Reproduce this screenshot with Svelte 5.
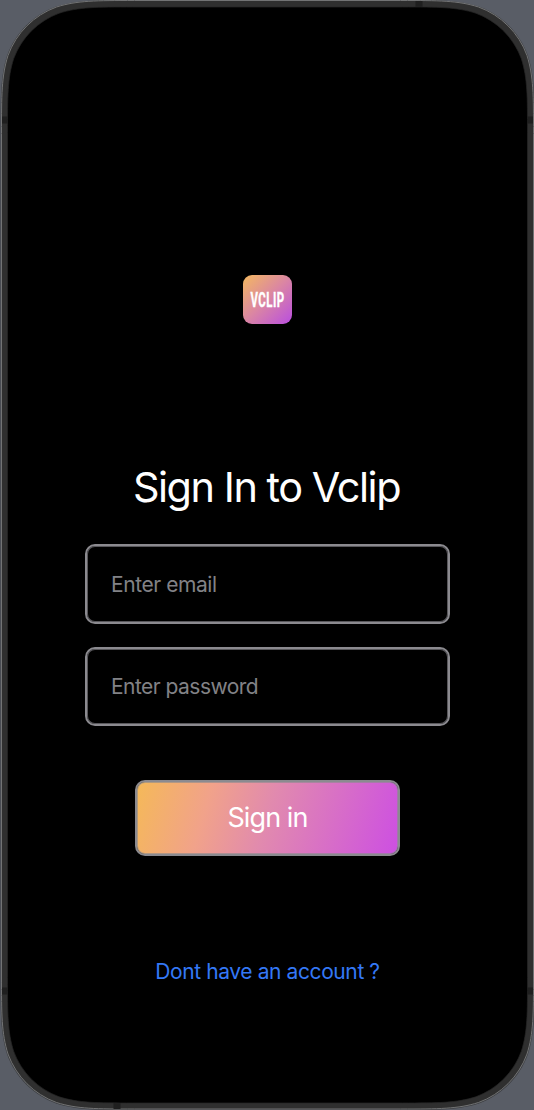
<script>
  let email = $state('');
  let password = $state('');

  // Continuous-curvature rounded rectangle, as used for device outlines.
  function outline(x0, y0, x1, y1, r) {
    const a = 1.5287 * r, b = 1.0885 * r, c = 0.8684 * r, d = 0.0749 * r;
    const e = 0.6315 * r, f = 0.3728 * r, g = 0.1691 * r;
    return [
      `M${x0 + a} ${y0}H${x1 - a}`,
      `C${x1 - b} ${y0} ${x1 - c} ${y0} ${x1 - e} ${y0 + d}`,
      `C${x1 - f} ${y0 + g} ${x1 - g} ${y0 + f} ${x1 - d} ${y0 + e}`,
      `C${x1} ${y0 + c} ${x1} ${y0 + b} ${x1} ${y0 + a}V${y1 - a}`,
      `C${x1} ${y1 - b} ${x1} ${y1 - c} ${x1 - d} ${y1 - e}`,
      `C${x1 - g} ${y1 - f} ${x1 - f} ${y1 - g} ${x1 - e} ${y1 - d}`,
      `C${x1 - c} ${y1} ${x1 - b} ${y1} ${x1 - a} ${y1}H${x0 + a}`,
      `C${x0 + b} ${y1} ${x0 + c} ${y1} ${x0 + e} ${y1 - d}`,
      `C${x0 + f} ${y1 - g} ${x0 + g} ${y1 - f} ${x0 + d} ${y1 - e}`,
      `C${x0} ${y1 - c} ${x0} ${y1 - b} ${x0} ${y1 - a}V${y0 + a}`,
      `C${x0} ${y0 + b} ${x0} ${y0 + c} ${x0 + d} ${y0 + e}`,
      `C${x0 + g} ${y0 + f} ${x0 + f} ${y0 + g} ${x0 + e} ${y0 + d}`,
      `C${x0 + c} ${y0} ${x0 + b} ${y0} ${x0 + a} ${y0}Z`
    ].join('');
  }
</script>

<div class="device">
  <svg class="frame" viewBox="0 0 534 1110" aria-hidden="true">
    <path d={outline(0.5, 0, 534.5, 1110, 88)} fill="#3b3d40" />
    <path d={outline(1.5, 0.5, 533.5, 1109, 87)} fill="#2f2f2f" stroke="#727374" />
    <path d="M415.500 1h7v6h-7zM113.500 1103h7v6h-7zM2 116.500h6v7h-6zM527 116.500h6v7h-6zM2 987.500h6v7h-6zM527 987.500h6v7h-6z" fill="#1f1f1f" />
    <path d={outline(7.5, 7, 527.5, 1103, 82)} fill="#000" stroke="#252525" stroke-width=".7" />
  </svg>

  <main class="screen">
    <svg class="logo" viewBox="0 0 49 49" role="img" aria-label="VCLIP">
      <defs>
        <linearGradient id="logo-fill" x1="0" y1="0" x2="1" y2="1">
          <stop offset="0" stop-color="#f4b95f" />
          <stop offset=".5" stop-color="#da85a4" />
          <stop offset="1" stop-color="#b94ee0" />
        </linearGradient>
      </defs>
      <rect width="49" height="49" rx="9" fill="url(#logo-fill)" />
      <text transform="translate(7.400 32.400) scale(.57 1)">VCLIP</text>
    </svg>

    <h1>Sign In to Vclip</h1>

    <form onsubmit={(e) => e.preventDefault()}>
      <input class="email" type="email" placeholder="Enter email" bind:value={email} />
      <input class="password" type="password" placeholder="Enter password" bind:value={password} />
      <button type="submit">Sign in</button>
    </form>

    <a href="#signup">Dont have an account ?</a>
  </main>
</div>

<style>
  :global(body) {
    margin: 0;
    background: #595d66;
  }

  .device {
    display: grid;
    width: 534px;
    height: 1110px;
    overflow: hidden;
    font-family: Inter, sans-serif;
  }

  .frame,
  .screen {
    grid-area: 1 / 1;
  }

  .frame {
    width: 534px;
    height: 1110px;
  }

  .screen {
    z-index: 1;
    display: flex;
    flex-direction: column;
    align-items: center;
    box-sizing: border-box;
    padding: 275px 0 0 1px;
  }

  .logo {
    width: 49px;
    height: 49px;
    flex: none;
    overflow: visible;
  }

  .logo text {
    fill: #fff;
    stroke: #fff;
    stroke-width: 0.4px;
    font: 700 20px Roboto, sans-serif;
    letter-spacing: 0.9px;
  }

  h1 {
    margin: 137px 0 0;
    padding-right: 2px;
    color: #fff;
    font-size: 41.4px;
    font-weight: 400;
    line-height: 52px;
    letter-spacing: -1.45px;
    white-space: nowrap;
  }

  form {
    display: flex;
    flex-direction: column;
    align-items: center;
    margin-top: 31px;
  }

  input {
    box-sizing: border-box;
    width: 365px;
    padding: 0 24px;
    border: 2px solid #8b8a8f;
    border-radius: 10px;
    outline: 0;
    background: #000;
    box-shadow: inset 0 0 0 1px #58575b;
    color: #fff;
    font: 400 21px Inter, sans-serif;
    letter-spacing: -0.43px;
  }

  input::placeholder {
    color: #828286;
    opacity: 1;
  }

  .email {
    height: 80px;
  }

  .password {
    height: 79px;
    margin-top: 23px;
    letter-spacing: -0.53px;
  }

  button {
    box-sizing: border-box;
    width: 265px;
    height: 76px;
    margin-top: 54px;
    padding: 0 0 1px;
    border: 2px solid #8b8a8f;
    border-radius: 10px;
    background: linear-gradient(106deg, #f5b958 0%, #f1a28a 27%, #e18aae 50%, #d76dc8 75%, #cd4fe2 100%) padding-box;
    box-shadow: inset 0 0 0 1px #8b8a8fa0;
    color: #fff;
    font: 400 27px Inter, sans-serif;
    letter-spacing: -0.9px;
  }

  a {
    margin-top: 101px;
    color: #3478f6;
    font-size: 21px;
    line-height: 30px;
    letter-spacing: -0.4px;
    text-decoration: none;
    white-space: nowrap;
  }
</style>
